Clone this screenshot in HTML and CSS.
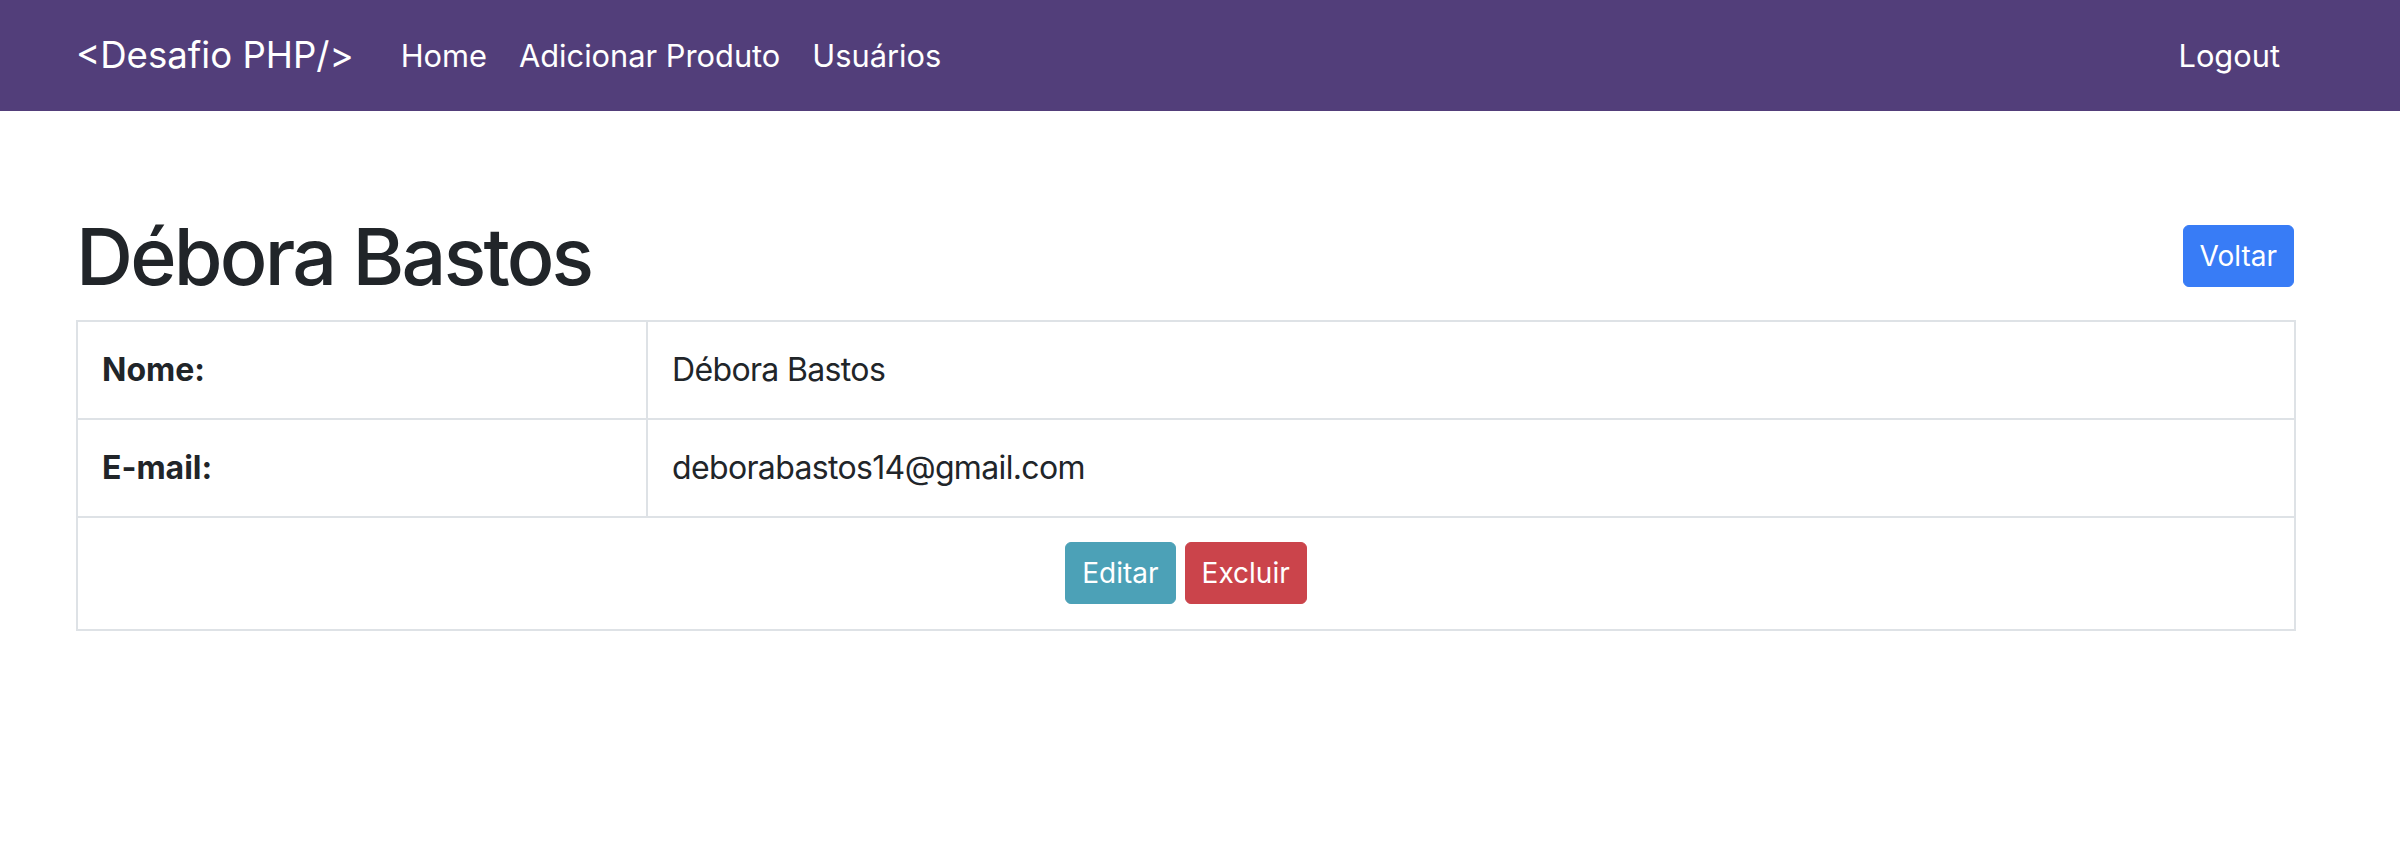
FILE: index.html
```html
<!DOCTYPE html>
<html lang="pt-BR">
<head>
<meta charset="utf-8">
<title>Desafio PHP</title>
<link rel="stylesheet" href="styles.css">
</head>
<body>
<nav class="navbar">
  <div class="nav-inner">
    <a class="brand" href="#">&lt;Desafio PHP/&gt;</a>
    <ul class="nav">
      <li><a class="nav-link" href="#">Home</a></li>
      <li><a class="nav-link" href="#">Adicionar Produto</a></li>
      <li><a class="nav-link" href="#">Usuários</a></li>
    </ul>
    <ul class="nav nav-right">
      <li><a class="nav-link" href="#">Logout</a></li>
    </ul>
  </div>
</nav>
<main class="container">
  <div class="page-header">
    <h1 class="title">Débora Bastos</h1>
    <a class="btn btn-primary" href="#">Voltar</a>
  </div>
  <table class="details">
    <tr>
      <th class="label">Nome:</th>
      <td>Débora Bastos</td>
    </tr>
    <tr>
      <th class="label">E-mail:</th>
      <td>deborabastos14@gmail.com</td>
    </tr>
    <tr>
      <td class="actions" colspan="2"><a class="btn btn-info" href="#">Editar</a> <a class="btn btn-danger" href="#">Excluir</a></td>
    </tr>
  </table>
</main>
</body>
</html>
```
FILE: styles.css
```css
* { box-sizing: border-box; }
html, body { margin: 0; padding: 0; }
body {
  font-family: Inter, "Noto Sans", "Liberation Sans", sans-serif;
  font-size: 32px;
  line-height: 1.5;
  color: #212529;
  background: #fff;
}
a { text-decoration: none; }

.navbar {
  background: #523e7a;
  padding: 16px 0;
}
.nav-inner {
  width: 2220px;
  margin-left: 76px;
  display: flex;
  align-items: center;
}
.brand {
  color: #fff;
  font-size: 36.6px;
  line-height: 79px;
  margin-right: 31px;
  white-space: nowrap;
}
.nav {
  list-style: none;
  margin: 0;
  padding: 0;
  display: flex;
}
.nav-right { margin-left: auto; }
.nav-link {
  display: block;
  color: #fff;
  padding: 16px 16px;
  font-size: 30.8px;
  line-height: 46px;
}

.container {
  width: 2220px;
  margin-left: 76px;
  margin-top: 97px;
}
.page-header {
  display: flex;
  justify-content: space-between;
  align-items: center;
  margin-bottom: 16px;
}
.title {
  margin: 0;
  font-size: 79px;
  font-weight: 500;
  line-height: 96px;
  letter-spacing: -2.8px;
}
.btn {
  display: inline-block;
  color: #fff;
  font-size: 28px;
  line-height: 42px;
  padding: 9px 16px;
  border-radius: 6px;
  border: 1px solid transparent;
  vertical-align: middle;
}
.btn-primary { background: #387cf6; border-color: #387cf6; margin-right: 2px; }
.btn-info { background: #4ca1b7; border-color: #4ca1b7; }
.btn-danger { background: #cb444b; border-color: #cb444b; }

.details {
  width: 100%;
  border-collapse: collapse;
  border: 2px solid #dee2e6;
}
.details th, .details td {
  border: 2px solid #dee2e6;
  padding: 24px;
  text-align: left;
  vertical-align: top;
  font-size: 32px;
  line-height: 48px;
  letter-spacing: -0.65px;
}
.details .label {
  width: 570px;
  font-weight: 700;
  letter-spacing: 0;
}
.details .actions {
  text-align: center;
  padding: 24px 24px 25px;
  letter-spacing: 0;
}
```
